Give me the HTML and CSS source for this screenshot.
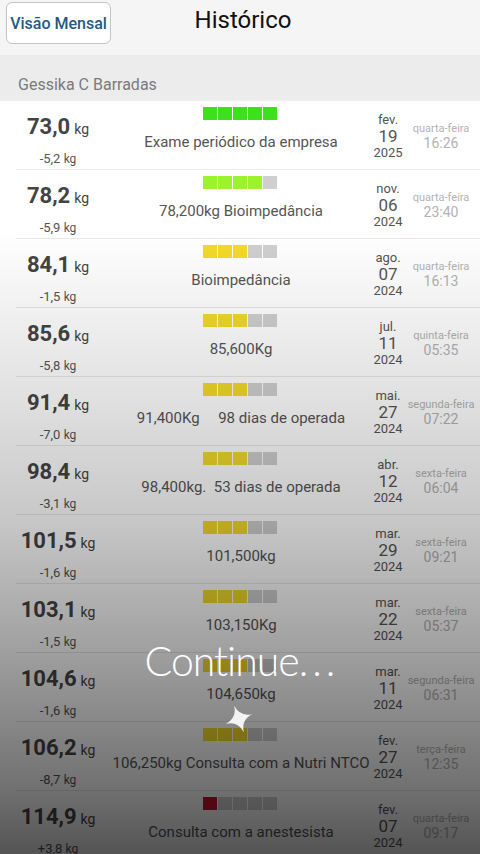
FILE: index.html
```html
<!DOCTYPE html>
<html lang="pt-BR">
<head>
    <meta charset="UTF-8">
    <meta name="viewport" content="width=device-width, initial-scale=1.0">
    <title>Histórico</title>
    <link rel="stylesheet" href="styles.css">
</head>
<body>
    <div class="top-bar">
        <button class="month-btn">Visão Mensal</button>
        <h1>Histórico</h1>
    </div>

    <div class="user-band">Gessika C Barradas</div>

    <ul class="history">
        <li class="entry">
            <div class="weight"><span class="num">73,0</span> <span class="unit">kg</span><div class="delta">-5,2 <span>kg</span></div></div>
            <div class="info">
                <div class="level lvl-green"><i class="on"></i><i class="on"></i><i class="on"></i><i class="on"></i><i class="on"></i></div>
                <div class="note">Exame periódico da empresa</div>
            </div>
            <div class="date"><span class="mon">fev.</span><span class="day">19</span><span class="yr">2025</span></div>
            <div class="time"><span class="wd">quarta-feira</span><span class="hr">16:26</span></div>
        </li>
        <li class="entry">
            <div class="weight"><span class="num">78,2</span> <span class="unit">kg</span><div class="delta">-5,9 <span>kg</span></div></div>
            <div class="info">
                <div class="level lvl-lime"><i class="on"></i><i class="on"></i><i class="on"></i><i class="on"></i><i></i></div>
                <div class="note">78,200kg Bioimpedância</div>
            </div>
            <div class="date"><span class="mon">nov.</span><span class="day">06</span><span class="yr">2024</span></div>
            <div class="time"><span class="wd">quarta-feira</span><span class="hr">23:40</span></div>
        </li>
        <li class="entry">
            <div class="weight"><span class="num">84,1</span> <span class="unit">kg</span><div class="delta">-1,5 <span>kg</span></div></div>
            <div class="info">
                <div class="level lvl-yellow"><i class="on"></i><i class="on"></i><i class="on"></i><i></i><i></i></div>
                <div class="note">Bioimpedância</div>
            </div>
            <div class="date"><span class="mon">ago.</span><span class="day">07</span><span class="yr">2024</span></div>
            <div class="time"><span class="wd">quarta-feira</span><span class="hr">16:13</span></div>
        </li>
        <li class="entry">
            <div class="weight"><span class="num">85,6</span> <span class="unit">kg</span><div class="delta">-5,8 <span>kg</span></div></div>
            <div class="info">
                <div class="level lvl-yellow"><i class="on"></i><i class="on"></i><i class="on"></i><i></i><i></i></div>
                <div class="note">85,600Kg</div>
            </div>
            <div class="date"><span class="mon">jul.</span><span class="day">11</span><span class="yr">2024</span></div>
            <div class="time"><span class="wd">quinta-feira</span><span class="hr">05:35</span></div>
        </li>
        <li class="entry">
            <div class="weight"><span class="num">91,4</span> <span class="unit">kg</span><div class="delta">-7,0 <span>kg</span></div></div>
            <div class="info">
                <div class="level lvl-yellow"><i class="on"></i><i class="on"></i><i class="on"></i><i></i><i></i></div>
                <div class="note">91,400Kg     98 dias de operada</div>
            </div>
            <div class="date"><span class="mon">mai.</span><span class="day">27</span><span class="yr">2024</span></div>
            <div class="time"><span class="wd">segunda-feira</span><span class="hr">07:22</span></div>
        </li>
        <li class="entry">
            <div class="weight"><span class="num">98,4</span> <span class="unit">kg</span><div class="delta">-3,1 <span>kg</span></div></div>
            <div class="info">
                <div class="level lvl-yellow"><i class="on"></i><i class="on"></i><i class="on"></i><i></i><i></i></div>
                <div class="note">98,400kg.  53 dias de operada</div>
            </div>
            <div class="date"><span class="mon">abr.</span><span class="day">12</span><span class="yr">2024</span></div>
            <div class="time"><span class="wd">sexta-feira</span><span class="hr">06:04</span></div>
        </li>
        <li class="entry">
            <div class="weight"><span class="num">101,5</span> <span class="unit">kg</span><div class="delta">-1,6 <span>kg</span></div></div>
            <div class="info">
                <div class="level lvl-yellow"><i class="on"></i><i class="on"></i><i class="on"></i><i></i><i></i></div>
                <div class="note">101,500kg</div>
            </div>
            <div class="date"><span class="mon">mar.</span><span class="day">29</span><span class="yr">2024</span></div>
            <div class="time"><span class="wd">sexta-feira</span><span class="hr">09:21</span></div>
        </li>
        <li class="entry">
            <div class="weight"><span class="num">103,1</span> <span class="unit">kg</span><div class="delta">-1,5 <span>kg</span></div></div>
            <div class="info">
                <div class="level lvl-yellow"><i class="on"></i><i class="on"></i><i class="on"></i><i></i><i></i></div>
                <div class="note">103,150Kg</div>
            </div>
            <div class="date"><span class="mon">mar.</span><span class="day">22</span><span class="yr">2024</span></div>
            <div class="time"><span class="wd">sexta-feira</span><span class="hr">05:37</span></div>
        </li>
        <li class="entry">
            <div class="weight"><span class="num">104,6</span> <span class="unit">kg</span><div class="delta">-1,6 <span>kg</span></div></div>
            <div class="info">
                <div class="level lvl-yellow"><i class="on"></i><i class="on"></i><i class="on"></i><i></i><i></i></div>
                <div class="note">104,650kg</div>
            </div>
            <div class="date"><span class="mon">mar.</span><span class="day">11</span><span class="yr">2024</span></div>
            <div class="time"><span class="wd">segunda-feira</span><span class="hr">06:31</span></div>
        </li>
        <li class="entry">
            <div class="weight"><span class="num">106,2</span> <span class="unit">kg</span><div class="delta">-8,7 <span>kg</span></div></div>
            <div class="info">
                <div class="level lvl-yellow"><i class="on"></i><i class="on"></i><i class="on"></i><i></i><i></i></div>
                <div class="note">106,250kg Consulta com a Nutri NTCO</div>
            </div>
            <div class="date"><span class="mon">fev.</span><span class="day">27</span><span class="yr">2024</span></div>
            <div class="time"><span class="wd">terça-feira</span><span class="hr">12:35</span></div>
        </li>
        <li class="entry">
            <div class="weight"><span class="num">114,9</span> <span class="unit">kg</span><div class="delta">+3,8 <span>kg</span></div></div>
            <div class="info">
                <div class="level lvl-red"><i class="on"></i><i></i><i></i><i></i><i></i></div>
                <div class="note">Consulta com a anestesista</div>
            </div>
            <div class="date"><span class="mon">fev.</span><span class="day">07</span><span class="yr">2024</span></div>
            <div class="time"><span class="wd">quarta-feira</span><span class="hr">09:17</span></div>
        </li>
    </ul>

    <!-- video end-card overlay -->
    <div class="fade"></div>
    <div class="continue">Continue<span class="dots">...</span></div>
    <svg class="sparkle" width="30" height="30" viewBox="-15 -15 30 30">
        <path d="M0,-14 Q1.6,-1.6 14,0 Q1.6,1.6 0,14 Q-1.6,1.6 -14,0 Q-1.6,-1.6 0,-14 Z" fill="#ffffff" transform="rotate(-20)"/>
    </svg>
</body>
</html>
```

FILE: styles.css
```css
:root {
    --text-dark: #444;
    --text-mid: #555;
    --text-light: #b3b3b3;
    --band-gray: #ececec;
    --line-gray: #e8e8e8;
    --link-blue: #1f5a85;
}

body {
    font-family: Roboto, "Noto Sans", Arial, sans-serif;
    margin: 0;
    padding: 0;
    background-color: #fff;
    height: 854px;
    overflow: hidden;
    position: relative;
}

.top-bar {
    height: 55px;
    background-color: #f5f5f5;
    position: relative;
    display: flex;
    align-items: flex-start;
}

.month-btn {
    margin: 2px 0 0 6px;
    width: 105px;
    height: 42px;
    padding: 0;
    background: #fff;
    border: 1px solid #c4c4c4;
    border-radius: 6px;
    color: var(--link-blue);
    font-family: Roboto, Arial, sans-serif;
    font-size: 16px;
    font-weight: 500;
}

.top-bar h1 {
    position: absolute;
    left: 0;
    right: 0;
    top: 6px;
    margin: 0;
    text-align: center;
    font-size: 24px;
    font-weight: 400;
    color: #111;
    padding-left: 6px;
    pointer-events: none;
}

.user-band {
    height: 46px;
    box-sizing: border-box;
    padding: 20px 0 0 18px;
    background-color: var(--band-gray);
    color: #7a7a7a;
    font-size: 16px;
    line-height: 20px;
}

.history {
    list-style: none;
    margin: 0;
    padding: 0;
}

.entry {
    height: 69px;
    display: grid;
    grid-template-columns: 116px 250px 44px 62px;
    position: relative;
}

.entry::after {
    content: "";
    position: absolute;
    left: 16px;
    right: 0;
    bottom: 0;
    height: 1px;
    background: var(--line-gray);
}

.weight {
    padding-top: 13px;
    text-align: center;
    color: var(--text-dark);
    line-height: 26px;
}

.weight .num {
    font-size: 22px;
    font-weight: 700;
}

.weight .unit {
    font-size: 14px;
}

.delta {
    margin-top: 7px;
    line-height: 20px;
    font-size: 13px;
    color: var(--text-mid);
}

.delta span {
    font-size: 12px;
}

.info {
    padding-top: 6px;
    display: flex;
    flex-direction: column;
    align-items: center;
}

.level {
    display: flex;
    gap: 1px;
    margin-left: -2px;
}

.level i {
    width: 14px;
    height: 13px;
    background: #cfcfcf;
}

.lvl-green .on { background: #3de11b; }
.lvl-lime .on { background: #9cf22c; }
.lvl-yellow .on { background: #f3da2a; }
.lvl-red .on { background: #c8102e; }

.note {
    margin-top: 12px;
    line-height: 20px;
    font-size: 15px;
    color: var(--text-mid);
    white-space: pre;
}

.date {
    padding-top: 11px;
    display: flex;
    flex-direction: column;
    align-items: center;
    color: var(--text-mid);
}

.date .mon {
    font-size: 13px;
    line-height: 16px;
}

.date .day {
    font-size: 17px;
    line-height: 17px;
}

.date .yr {
    font-size: 13px;
    line-height: 16px;
}

.time {
    padding-top: 21px;
    display: flex;
    flex-direction: column;
    align-items: center;
    color: var(--text-light);
    line-height: 14px;
    white-space: nowrap;
}

.time .wd {
    font-size: 11px;
}

.time .hr {
    font-size: 14px;
}

.fade {
    position: absolute;
    left: 0;
    top: 0;
    width: 480px;
    height: 854px;
    background: linear-gradient(to bottom,
        rgba(0,0,0,0) 230px,
        rgba(0,0,0,0.12) 400px,
        rgba(0,0,0,0.22) 520px,
        rgba(0,0,0,0.36) 640px,
        rgba(0,0,0,0.56) 790px,
        rgba(0,0,0,0.67) 854px);
    pointer-events: none;
}

.continue {
    position: absolute;
    left: 0;
    right: 0;
    top: 636px;
    text-align: center;
    padding-left: 4px;
    font-family: Lato, "Open Sans", sans-serif;
    font-weight: 300;
    font-size: 41px;
    letter-spacing: -1px;
    color: #fff;
}

.continue .dots {
    letter-spacing: 4px;
}

.sparkle {
    position: absolute;
    left: 224px;
    top: 704px;
    opacity: 0.9;
}
```
